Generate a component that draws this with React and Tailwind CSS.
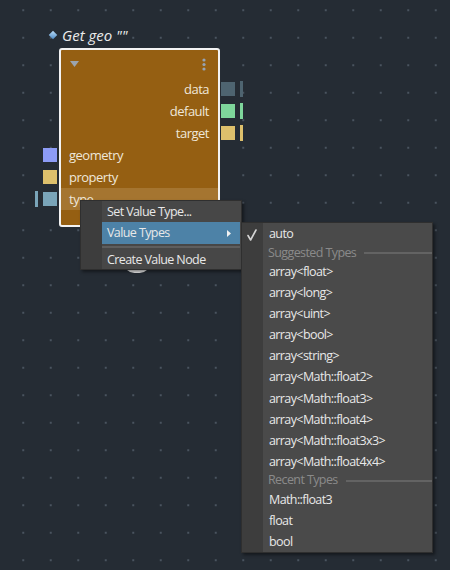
import React from "react";

const font = { fontFamily: '"Open Sans", "Noto Sans", sans-serif' };

function PortRight({ color }) {
  return (
    <>
      <div className="absolute -right-[17px] top-[4px] w-[14px] h-[14px]" style={{ background: color }} />
      <div className="absolute -right-[25px] top-[3px] w-[3px] h-[16px]" style={{ background: color }} />
    </>
  );
}

function PortLeft({ color, bar }) {
  return (
    <>
      <div className="absolute -left-[18px] top-[4px] w-[14px] h-[14px]" style={{ background: color }} />
      {bar && <div className="absolute -left-[26px] top-[3px] w-[3px] h-[16px]" style={{ background: color }} />}
    </>
  );
}

function Header({ children }) {
  return (
    <div className="flex items-center h-[17px] pl-[5px] pt-[1px] gap-[8px] text-[#8a8a8a]">
      <span className="whitespace-nowrap">{children}</span>
      <div className="flex-1 h-[2px] bg-[#636363]" />
    </div>
  );
}

function Item({ children }) {
  return <div className="flex items-center h-[21.2px] pl-[6px] pt-[2px] text-[#e8e8e8] whitespace-nowrap">{children}</div>;
}

export default function App() {
  const suggested = [
    "array<float>",
    "array<long>",
    "array<uint>",
    "array<bool>",
    "array<string>",
    "array<Math::float2>",
    "array<Math::float3>",
    "array<Math::float4>",
    "array<Math::float3x3>",
    "array<Math::float4x4>",
  ];
  return (
    <div
      className="relative w-[450px] h-[570px] overflow-hidden bg-[#252c34] bg-[radial-gradient(circle,#4a545f_0.7px,transparent_1px)] bg-[size:27.5px_27.5px] bg-[position:9.5px_-3.5px] text-[12.5px] tracking-[-0.6px]"
      style={font}
    >
      {/* title */}
      <div className="absolute left-[50px] top-[24px] flex items-center gap-[6px] tracking-normal">
        <div className="w-[6px] h-[6px] rotate-45 bg-[linear-gradient(135deg,#b9dcf8,#4f8cc6)]" />
        <span className="italic text-[15px] text-[#ececec]">Get geo ""</span>
      </div>

      {/* white arc behind menu */}
      <div className="absolute left-[124px] top-[252px] w-[26px] h-[21px] rounded-full bg-[#ededed]" />

      {/* node */}
      <div className="absolute left-[59px] top-[48px] w-[161px] h-[179px] border-2 border-[#f3f3f3] rounded-[3px] bg-[#955f12] text-[13px] tracking-[-0.5px] text-[#efe7da]">
        <div className="flex items-center justify-between h-[28px] pl-[9px] pr-[12px]">
          <svg width="9" height="6" viewBox="0 0 9 6">
            <path d="M0 0 H9 L4.5 6 Z" fill="#9ba4ae" />
          </svg>
          <svg width="4" height="13" viewBox="0 0 4 13">
            <circle cx="2" cy="2" r="1.6" fill="#97a3b3" />
            <circle cx="2" cy="6.5" r="1.6" fill="#97a3b3" />
            <circle cx="2" cy="11" r="1.6" fill="#97a3b3" />
          </svg>
        </div>
        <div className="relative flex items-center justify-end h-[22px] pr-[9px] pt-[2px]">
          data
          <PortRight color="#4e6470" />
        </div>
        <div className="relative flex items-center justify-end h-[22px] pr-[9px] pt-[2px]">
          default
          <PortRight color="#7ed69b" />
        </div>
        <div className="relative flex items-center justify-end h-[22px] pr-[9px] pt-[2px]">
          target
          <PortRight color="#ddc06c" />
        </div>
        <div className="relative flex items-center h-[22px] pl-[8px] pt-[2px]">
          geometry
          <PortLeft color="#8d9cf6" />
        </div>
        <div className="relative flex items-center h-[22px] pl-[8px] pt-[2px]">
          property
          <PortLeft color="#ddc06c" />
        </div>
        <div className="relative flex items-center h-[22px] pl-[8px] pt-[2px] bg-[#a57530]">
          type
          <PortLeft color="#7aa5b9" bar />
        </div>
      </div>

      {/* context menu */}
      <div className="absolute left-[80px] top-[200px] w-[162px] h-[70px] flex bg-[#474747] border border-[#2f2f2f] shadow-[2px_2px_3px_rgba(0,0,0,0.45)] text-[#e8e8e8]">
        <div className="w-[21px] bg-[#3d3d3d]" />
        <div className="flex-1 flex flex-col pr-[1px]">
          <div className="flex items-center h-[21px] pl-[5px] pt-[2px]">Set Value Type...</div>
          <div className="flex items-center justify-between h-[22px] pl-[5px] pr-[9px] pt-[1px] bg-[#4d82a7]">
            <span>Value Types</span>
            <svg width="4" height="7" viewBox="0 0 4 7">
              <path d="M0 0 L4 3.5 L0 7 Z" fill="#f2f2f2" />
            </svg>
          </div>
          <div className="h-[6px] flex items-center">
            <div className="w-full h-[2px] bg-[#5e5e5e]" />
          </div>
          <div className="flex items-center h-[19px] pl-[5px] pt-[2px]">Create Value Node</div>
        </div>
      </div>

      {/* submenu */}
      <div className="absolute left-[241px] top-[222px] w-[192px] h-[331px] flex bg-[#4a4a4a] border border-[#2f2f2f] shadow-[2px_2px_3px_rgba(0,0,0,0.45)]">
        <div className="w-[21px] bg-[#3d3d3d] relative">
          <svg className="absolute left-[5px] top-[6px]" width="10" height="12" viewBox="0 0 10 12">
            <path d="M1 6.5 L3.6 11 L9 1" stroke="#d4d4d4" strokeWidth="1.6" fill="none" strokeLinecap="round" strokeLinejoin="round" />
          </svg>
        </div>
        <div className="flex-1 flex flex-col">
          <div className="flex items-center h-[21px] pl-[6px] pt-[2px] text-[#e8e8e8]">auto</div>
          <Header>Suggested Types</Header>
          {suggested.map((s) => (
            <Item key={s}>{s}</Item>
          ))}
          <Header>Recent Types</Header>
          <Item>Math::float3</Item>
          <Item>float</Item>
          <Item>bool</Item>
        </div>
      </div>
    </div>
  );
}
